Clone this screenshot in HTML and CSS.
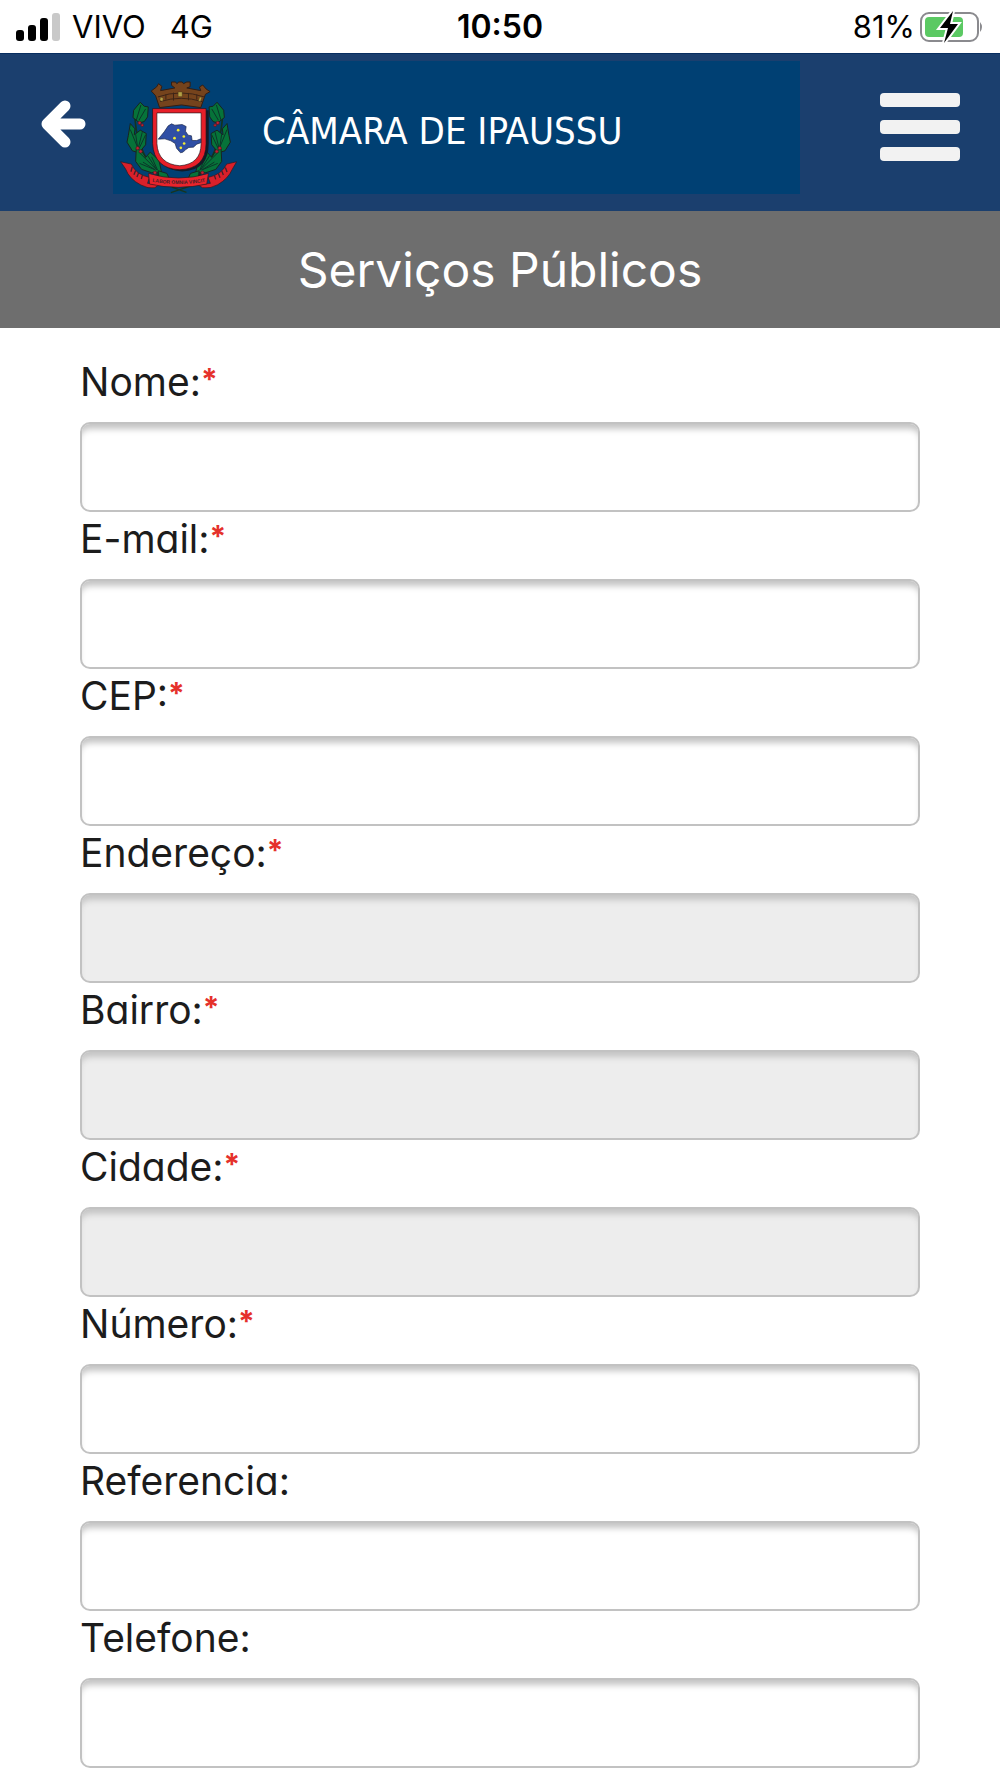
FILE: index.html
```html
<!DOCTYPE html>
<html lang="pt-BR">
<head>
<meta charset="utf-8">
<meta name="viewport" content="width=device-width, initial-scale=1">
<title>Serviços Públicos</title>
<link rel="stylesheet" href="styles.css">
</head>
<body>
<div class="status">
  <div class="status-left">
    <svg class="signal" viewBox="0 0 44 28" aria-hidden="true">
      <rect x="0" y="17" width="8" height="11" rx="3"/>
      <rect x="12" y="12" width="8" height="16" rx="3"/>
      <rect x="24" y="5" width="8" height="23" rx="3"/>
      <rect x="36" y="0" width="8" height="28" rx="3" fill="#c9c9c9"/>
    </svg>
    <span>VIVO</span>
    <span class="network">4G</span>
  </div>
  <div class="clock">10:50</div>
  <div class="status-right">
    <span>81%</span>
    <svg class="battery" viewBox="0 0 64 32" aria-hidden="true">
      <rect x="1" y="2" width="57" height="28" rx="8" fill="#fff" stroke="#8a8a8e" stroke-width="2"/>
      <rect x="5" y="6" width="38" height="20" rx="4" fill="#5bc963"/>
      <path d="M60 11q4 5 0 10z" fill="#8a8a8e"/>
      <path d="M33 0 20 17h8l-4 15 14-19h-8z" fill="#000" stroke="#fff" stroke-width="4" paint-order="stroke"/>
    </svg>
  </div>
</div>
<header class="topbar">
  <button class="icon-button back" type="button" aria-label="Voltar">
    <svg viewBox="0 0 46 54" width="46" height="54"><path d="M25 6 7 24l18 18M8 24h32" fill="none" stroke="#fff" stroke-width="11" stroke-linejoin="round" stroke-linecap="round"/></svg>
  </button>
  <a class="brand" href="#">
    <svg class="crest" viewBox="30 30 350 340" aria-hidden="true">
      <path d="M185 349l44 16M240 346l-58 20" stroke="#17351f" stroke-width="4"/>
      <g id="branch">
        <path d="M74 124Q72 230 144 314" fill="none" stroke="#12351f" stroke-width="5"/>
        <g fill="#067339" stroke="#17251f" stroke-width="3">
          <path d="M90 94l12 12 12 2-2 30-10 14-14 4-20-16 2-22z"/>
          <path d="M60 158l14 16-2 18 18-14 18 10-2 34-20 24-20-6-16-26 4-20z"/>
          <path d="M78 232l18 12 10 16 14-16 26 24 8 36-30 2-30-10-18-24z"/>
          <path d="M144 300l26 8 10 22-34-4z"/>
        </g>
        <path d="M92 102 78 148M106 114 86 148M60 176l22 54M76 190l6 40M96 184l-12 48M106 192l-20 42M86 244l54 54M98 274l38 24M112 254l28 44M124 258l18 40M88 278l44 18" stroke="#0b3529" stroke-width="3" fill="none"/>
        <g fill="#c32032" stroke="#4b1820" stroke-width="2"><circle cx="88" cy="156" r="5"/><circle cx="96" cy="163" r="4"/><circle cx="82" cy="232" r="5"/><circle cx="91" cy="242" r="5"/><circle cx="134" cy="306" r="5"/></g>
      </g>
      <use href="#branch" transform="matrix(-1 0 0 1 411 0)"/>
      <path d="M119 58l16-12 6-10 10 8-4 13 43-8-10-8v-10h12l4 5 6-5h10l4 5 10-5h10v14l-10 4 42 8-4-11 10-6 10 12 12 8-14 8-14 40-58-8-66 8-12-36z" transform="translate(4 2)" fill="#75431c" stroke="#331d13" stroke-width="3"/>
      <path d="M143 78q68-24 140 0M150 92q63-20 126 0M167 70v16M190 65v24M235 66v22M260 70v16" fill="none" stroke="#3d2416" stroke-width="3"/>
      <path d="M204 63h12v14h-12zM151 78l8 4-2 10-8-4zM269 78l6 2-4 12-6-2z" fill="#b3a044" stroke="#40351a"/>
      <path d="M136 118h160v100q0 82-80 84-76-2-80-84z" fill="#141b28"/>
      <path d="M127 113h161v105q0 76-79 79-78-3-82-79z" fill="#e71f29" stroke="#19151b" stroke-width="2"/>
      <path d="M140 126h133v92q0 62-64 67-66-5-69-67z" fill="#fff" stroke="#201a20" stroke-width="2"/>
      <path d="M144 205l18-22 12-18 10-6 10 4 22-2 12 6-2 14 8 12 10 2 2 14 14 0 12-5v12l-12 4-10 9-14 1-9 6-8 8-8 2-12-14-4-14-13-8-18-6z" fill="#304fa5" stroke="#182649" stroke-width="2"/>
      <g fill="#f4ed31"><circle cx="204" cy="178" r="4"/><circle cx="193" cy="202" r="4"/><circle cx="221" cy="197" r="4"/><circle cx="222" cy="218" r="4"/><circle cx="212" cy="231" r="4"/></g>
      <path d="M31 273l32 7q14 32 54 40l-5 18 34 4-12 9q-20 4-42-8-35-18-46-48zM380 273l-30 7q-15 32-56 40l7 18-36 5 12 8q24 4 46-9 32-19 43-45z" fill="#d9202a" stroke="#34151d" stroke-width="2"/>
      <path d="M115 308q90 28 180 0l-5 32q-86 20-172 0z" fill="#e8242c" stroke="#34151d" stroke-width="2"/>
      <path id="motto" d="M105 329q101 22 202 0" fill="none"/>
      <text class="motto"><textPath href="#motto" startOffset="50%">LABOR OMNIA VINCIT</textPath></text>
      <path d="M66 288l-4 15M76 299l-5 13M85 306l-5 13M97 312l-4 13M346 290l5 14M335 300l5 13M325 308l5 13M313 314l4 12" stroke="#43202a" stroke-width="4"/>
    </svg>
    <span>CÂMARA DE IPAUSSU</span>
  </a>
  <button class="icon-button menu" type="button" aria-label="Menu"><i></i><i></i><i></i></button>
</header>
<h1 class="page-title">Serviços Públicos</h1>
<form class="form">
  <label for="nome">Nome:<b>*</b></label>
  <input id="nome" type="text" required>
  <label for="email">E-mail:<b>*</b></label>
  <input id="email" type="email" required>
  <label for="cep">CEP:<b>*</b></label>
  <input id="cep" type="text" required>
  <label for="endereco">Endereço:<b>*</b></label>
  <input id="endereco" type="text" disabled>
  <label for="bairro">Bairro:<b>*</b></label>
  <input id="bairro" type="text" disabled>
  <label for="cidade">Cidade:<b>*</b></label>
  <input id="cidade" type="text" disabled>
  <label for="numero">Número:<b>*</b></label>
  <input id="numero" type="text" required>
  <label for="referencia">Referencia:</label>
  <input id="referencia" type="text">
  <label for="telefone">Telefone:</label>
  <input id="telefone" type="tel">
</form>
</body>
</html>
```
FILE: styles.css
```css
* { box-sizing: border-box; }
body {
  margin: 0;
  background: #fff;
  color: #1c1c1c;
  font-family: Inter, "Liberation Sans", sans-serif;
}
.status {
  display: grid;
  grid-template-columns: 1fr auto 1fr;
  align-items: center;
  height: 53px;
  padding: 1px 16px 0;
  color: #000;
  font-size: 31px;
  line-height: 36px;
}
.status-left, .status-right { display: flex; align-items: center; }
.status-right { justify-content: flex-end; gap: 5px; }
.signal { width: 44px; height: 28px; margin-right: 12px; }
.network { margin-left: 24px; }
.clock { font-size: 32px; font-weight: 600; }
.battery { width: 64px; height: 32px; }
.topbar {
  display: flex;
  align-items: center;
  height: 158px;
  padding: 0 40px 11px;
  background: #1b3f6e;
  border-top: 1px solid #082e60;
}
.icon-button { padding: 0; border: 0; background: none; }
.back { display: flex; margin-right: 27px; }
.brand {
  flex: 1;
  display: flex;
  align-items: center;
  gap: 25px;
  height: 133px;
  padding-left: 7px;
  background: #004073;
  color: #fff;
  font-family: "DejaVu Sans Condensed", "DejaVu Sans", sans-serif;
  font-size: 38px;
  line-height: 48px;
  text-decoration: none;
}
.brand span { padding-top: 8px; }
.crest { width: 117px; height: 113px; margin-top: 20px; }
.motto { font: bold 15px "Liberation Sans", sans-serif; fill: #40202a; text-anchor: middle; }
.menu {
  display: flex;
  flex-direction: column;
  gap: 13px;
  width: 80px;
  margin-left: 80px;
}
.menu i { height: 14px; border-radius: 4px; background: #f2f2f2; }
.page-title {
  margin: 0;
  height: 117px;
  background: #6e6e6e;
  color: #fff;
  font-size: 48px;
  font-weight: 400;
  font-feature-settings: "cv11";
  line-height: 117px;
  text-align: center;
}
.form {
  display: flex;
  flex-direction: column;
  padding: 27px 80px 8px;
}
.form label {
  padding-bottom: 13px;
  font-size: 39px;
  font-feature-settings: "cv11";
  line-height: 54px;
}
.form b { color: #e5312b; font-size: 30px; line-height: 48px; vertical-align: top; }
.form input {
  width: 100%;
  height: 90px;
  padding: 0 20px;
  border: 2px solid #c2c2c2;
  border-radius: 10px;
  background: #fff;
  box-shadow: inset 0 8px 6px -3px #c4c4c4;
  font: inherit;
  font-size: 39px;
}
.form input:disabled { background: #ededed; }
```
